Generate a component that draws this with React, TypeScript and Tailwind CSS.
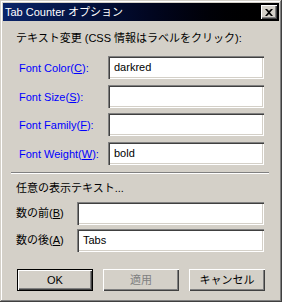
import React from "react";

const font = { fontFamily: '"Liberation Sans", "Noto Sans CJK JP", sans-serif' };

function Field({ value, width }: { value?: string; width: string }) {
  return (
    <div
      className={`${width} h-[23px] shrink-0 bg-white flex items-center pl-[6px] text-[11px] leading-[13px] text-black shadow-[inset_1px_1px_#808080,inset_2px_2px_#404040,inset_-1px_-1px_#ffffff,inset_-2px_-2px_#d4d0c8]`}
    >
      {value}
    </div>
  );
}

function Btn({ children, def, disabled }: { children: React.ReactNode; def?: boolean; disabled?: boolean }) {
  return (
    <div
      className={`w-[76px] h-[22px] flex items-center justify-center text-[11px] leading-[13px] whitespace-nowrap ${
        disabled ? "text-[#808080]" : "text-black"
      } ${
        def
          ? "shadow-[inset_1px_1px_#000,inset_-1px_-1px_#000,inset_2px_2px_#ffffff,inset_-2px_-2px_#404040,inset_-3px_-3px_#808080]"
          : "shadow-[inset_1px_1px_#ffffff,inset_-1px_-1px_#404040,inset_-2px_-2px_#808080]"
      }`}
    >
      {children}
    </div>
  );
}

function Label({ text, key1 }: { text: string; key1: string }) {
  return (
    <span className="text-[11px] leading-[13px] text-[#0000ff] whitespace-nowrap">
      {text}(<span className="underline">{key1}</span>):
    </span>
  );
}

export default function App() {
  return (
    <div
      style={font}
      className="w-[282px] h-[302px] bg-[#d4d0c8] p-[3px] flex flex-col shadow-[inset_-1px_-1px_#404040,inset_1px_1px_#d4d0c8,inset_-2px_-2px_#808080,inset_2px_2px_#ffffff]"
    >
      <div className="h-[18px] shrink-0 bg-gradient-to-r from-[#0a246a] to-[#000000] flex items-center justify-between pl-[2px] pr-[2px]">
        <span className="text-white text-[11px] leading-[13px] whitespace-nowrap">Tab Counter オプション</span>
        <div className="w-[16px] h-[14px] bg-[#d4d0c8] flex items-center justify-center shadow-[inset_1px_1px_#ffffff,inset_-1px_-1px_#404040,inset_-2px_-2px_#808080]">
          <svg width="8" height="7" viewBox="0 0 8 7">
            <path d="M0 0h2l2 2 2-2h2L5 3.5 8 7H6L4 5 2 7H0l3-3.5z" fill="#000" />
          </svg>
        </div>
      </div>

      <div className="flex flex-col pl-[13px] pr-[13px]">
        <div className="mt-[10px] h-[14px] flex items-center text-[11px] leading-[13px] text-black whitespace-nowrap">
          テキスト変更 (CSS 情報はラベルをクリック):
        </div>

        <div className="flex items-center mt-[10px] pl-[3px]">
          <div className="w-[89px] shrink-0"><Label text="Font Color" key1="C" /></div>
          <Field value="darkred" width="w-[156px]" />
        </div>
        <div className="flex items-center mt-[5px] pl-[3px]">
          <div className="w-[89px] shrink-0"><Label text="Font Size" key1="S" /></div>
          <Field width="w-[156px]" />
        </div>
        <div className="flex items-center mt-[4px] pl-[3px]">
          <div className="w-[89px] shrink-0"><Label text="Font Family" key1="F" /></div>
          <Field width="w-[156px]" />
        </div>
        <div className="flex items-center mt-[5px] pl-[3px]">
          <div className="w-[89px] shrink-0"><Label text="Font Weight" key1="W" /></div>
          <Field value="bold" width="w-[156px]" />
        </div>

        <div className="mt-[7px] ml-[-5px] w-[258px] h-[2px] border-t border-t-[#808080] border-b border-b-white" />

        <div className="mt-[7px] h-[14px] flex items-center text-[11px] leading-[13px] text-black whitespace-nowrap">
          任意の表示テキスト...
        </div>

        <div className="flex items-center mt-[7px]">
          <div className="w-[61px] shrink-0 text-[11px] leading-[13px] text-black whitespace-nowrap">
            数の前(<span className="underline">B</span>)
          </div>
          <Field width="w-[187px]" />
        </div>
        <div className="flex items-center mt-[4px]">
          <div className="w-[61px] shrink-0 text-[11px] leading-[13px] text-black whitespace-nowrap">
            数の後(<span className="underline">A</span>)
          </div>
          <Field value="Tabs" width="w-[187px]" />
        </div>

        <div className="flex mt-[17px] pl-[1px] gap-[10px]">
          <Btn def>OK</Btn>
          <Btn disabled>適用</Btn>
          <Btn>キャンセル</Btn>
        </div>
      </div>
    </div>
  );
}
